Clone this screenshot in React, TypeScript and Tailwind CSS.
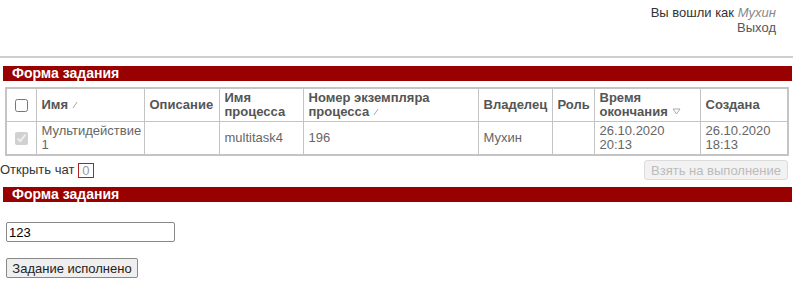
import React from 'react';

const font = { fontFamily: '"Liberation Sans", Arial, sans-serif' };

function SortMark({ down }: { down?: boolean }) {
    if (down) {
        return (
            <svg width="9" height="8" viewBox="0 0 9 8" className="inline-block ml-1 align-baseline">
                <path d="M1 1 H8 L4.5 6 Z" fill="none" stroke="#aaa" strokeWidth="1" />
            </svg>
        );
    }
    return (
        <svg width="6" height="8" viewBox="0 0 6 8" className="inline-block ml-1 align-baseline">
            <path d="M1 7 L5 1" stroke="#aaa" strokeWidth="1" />
        </svg>
    );
}

function Bar({ title }: { title: string }) {
    return (
        <div className="mx-[3px] w-[789px] h-[15px] bg-[#990000] text-white font-bold text-[14px] leading-[15px] pl-[9px]">
            {title}
        </div>
    );
}

export default function App() {
    const th = 'border border-[#c4c4c4] px-[5px] py-[2px] text-left align-middle font-bold text-[#555] text-[13px] leading-[14px]';
    const td = 'border border-[#c4c4c4] px-[5px] py-[2px] align-middle text-[#666] text-[13px] leading-[14px]';

    return (
        <div className="w-[800px] h-[281px] bg-white overflow-hidden" style={font}>
            <div className="flex flex-col items-end pr-[24px] pt-[5px] text-[13px] leading-[15px]">
                <div className="text-[#333]">
                    Вы вошли как <span className="italic text-[#888]">Мухин</span>
                </div>
                <div className="text-[#555]">Выход</div>
            </div>
            <div className="mt-[21px] w-[793px] h-[2px] bg-[#cfcfcf]" />
            <div className="mt-[8px]">
                <Bar title="Форма задания" />
            </div>
            <table className="mt-[6px] ml-[5px] w-[782px] table-fixed border-collapse border-2 border-[#c4c4c4]">
                <colgroup>
                    <col className="w-[30px]" />
                    <col className="w-[108px]" />
                    <col className="w-[75px]" />
                    <col className="w-[84px]" />
                    <col className="w-[175px]" />
                    <col className="w-[74px]" />
                    <col className="w-[42px]" />
                    <col className="w-[106px]" />
                    <col className="w-[88px]" />
                </colgroup>
                <thead>
                    <tr className="h-[33px]">
                        <th className="border border-[#c4c4c4] text-center">
                            <input type="checkbox" className="w-[13px] h-[13px] align-middle" />
                        </th>
                        <th className={th}>Имя<SortMark /></th>
                        <th className={th}>Описание</th>
                        <th className={th}>Имя<br />процесса</th>
                        <th className={th}>Номер экземпляра<br />процесса<SortMark /></th>
                        <th className={th}>Владелец</th>
                        <th className={th}>Роль</th>
                        <th className={th}>Время<br />окончания<SortMark down /></th>
                        <th className={th}>Создана</th>
                    </tr>
                </thead>
                <tbody>
                    <tr className="h-[33px]">
                        <td className="border border-[#c4c4c4] text-center">
                            <input type="checkbox" checked disabled readOnly className="w-[13px] h-[13px] align-middle" />
                        </td>
                        <td className={td}>Мультидействие<br />1</td>
                        <td className={td}></td>
                        <td className={td}>multitask4</td>
                        <td className={td}>196</td>
                        <td className={td}>Мухин</td>
                        <td className={td}></td>
                        <td className={td}>26.10.2020<br />20:13</td>
                        <td className={td}>26.10.2020<br />18:13</td>
                    </tr>
                </tbody>
            </table>
            <div className="flex items-center justify-between w-[788px] mt-[4px] h-[20px]">
                <div className="flex items-center text-[13px] text-[#333]">
                    Открыть чат
                    <span className="ml-[4px] px-[3px] h-[15px] leading-[13px] border border-[#b22222] text-[#999] text-[13px]">0</span>
                </div>
                <button
                    disabled
                    className="h-[20px] px-[6px] text-[13px] text-[#bbb] bg-[#f2f2f2] border border-[#dcdcdc] rounded-[3px]"
                >
                    Взять на выполнение
                </button>
            </div>
            <div className="mt-[7px]">
                <Bar title="Форма задания" />
            </div>
            <div className="pl-[6px] pt-[20px]">
                <input
                    type="text"
                    defaultValue="123"
                    className="block w-[169px] h-[20px] px-[2px] text-[13px] text-black border border-[#888] rounded-[2px] outline-none"
                />
                <button className="mt-[16px] h-[20px] w-[132px] text-[13px] text-[#222] bg-[#efefef] border border-[#888] rounded-[2px]">
                    Задание исполнено
                </button>
            </div>
        </div>
    );
}
